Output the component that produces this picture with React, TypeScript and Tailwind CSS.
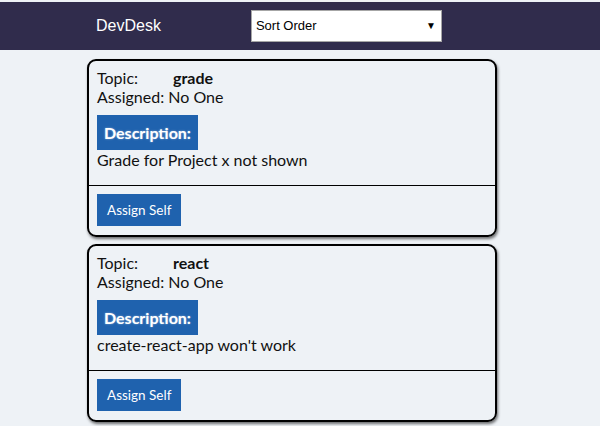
import { useState } from "react";

type Ticket = {
  id: number;
  topic: string;
  assigned: string;
  description: string;
};

const tickets: Ticket[] = [
  { id: 1, topic: "grade", assigned: "No One", description: "Grade for Project x not shown" },
  { id: 2, topic: "react", assigned: "No One", description: "create-react-app won't work" },
];

function TicketCard({ ticket }: { ticket: Ticket }) {
  return (
    <div className="rounded-[9px] border-2 border-black shadow-[1px_2px_3px_rgba(0,0,0,0.55)]">
      <div className="px-[8px] pt-[7px] pb-[16px] text-[16px] leading-[19px] text-[#111]">
        <div className="flex">
          <span className="w-[76px]">Topic:</span>
          <span className="font-bold">{ticket.topic}</span>
        </div>
        <div>Assigned: {ticket.assigned}</div>
        <h3 className="mt-[9px] inline-block h-[35px] bg-[#1f62ae] px-[7px] text-[16px] font-bold leading-[35px] text-white [text-shadow:0_0_2px_rgba(255,255,255,0.5)]">
          Description:
        </h3>
        <p>{ticket.description}</p>
      </div>
      <div className="border-t border-black px-[8px] pt-[8px] pb-[9px]">
        <button className="h-[32px] bg-[#1f62ae] px-[10px] text-[13.5px] text-white">Assign Self</button>
      </div>
    </div>
  );
}

export default function App() {
  const [sort, setSort] = useState("");

  return (
    <div className="min-h-[426px] bg-[#eef2f6] pt-[2px] font-['Lato','Liberation_Sans',sans-serif]">
      <header className="flex h-[48px] items-center bg-[#302c4c]">
        <span className="ml-[96px] font-['Liberation_Sans',Arial,sans-serif] text-[16px] text-white">DevDesk</span>
        <div className="relative ml-[90px]">
          <select
            value={sort}
            onChange={(e) => setSort(e.target.value)}
            className="h-[32px] w-[191px] appearance-none rounded-none border border-[#a6a6a6] bg-white pl-[4px] font-['Liberation_Sans',Arial,sans-serif] text-[13px] text-black outline-none"
          >
            <option value="">Sort Order</option>
            <option value="new">Newest</option>
            <option value="old">Oldest</option>
          </select>
          <span className="pointer-events-none absolute right-[6px] top-[8px] text-[10px] text-black">▼</span>
        </div>
      </header>
      <main className="ml-[87px] mt-[9px] flex w-[410px] flex-col gap-[7px]">
        {tickets.map((t) => (
          <TicketCard key={t.id} ticket={t} />
        ))}
      </main>
    </div>
  );
}
